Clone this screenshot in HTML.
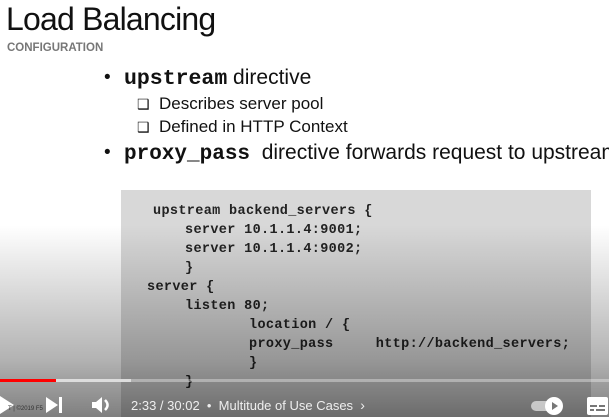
<!DOCTYPE html>
<html><head><style>
*{margin:0;padding:0;box-sizing:border-box}
html,body{width:609px;height:417px;overflow:hidden}
body{background:#fff;position:relative;font-family:"Liberation Sans",Arial,sans-serif;color:#111}
.a{position:absolute;white-space:nowrap}
.m{font-family:"Liberation Mono","Courier New",monospace;font-weight:bold}
#code{position:absolute;left:121px;top:190px;width:470px;height:227px;background:#d8d8d8}
.cl{position:absolute;font-family:"Liberation Mono",monospace;font-weight:bold;font-size:13.5px;letter-spacing:0.35px;color:#222;white-space:pre}
#shade{position:absolute;left:0;top:0;width:609px;height:417px;background:linear-gradient(to bottom,rgba(0,0,0,0) 0,rgba(0,0,0,0) 225px,rgba(0,0,0,0.12) 280px,rgba(0,0,0,0.3) 360px,rgba(0,0,0,0.5) 417px)}
</style></head><body>
<div class="a" style="left:6px;top:1px;font-size:32px;letter-spacing:-0.8px;color:#111">Load Balancing</div>
<div class="a" style="left:7px;top:42px;font-size:11.5px;font-weight:bold;color:#777">CONFIGURATION</div>

<div class="a" style="left:104px;top:67px;font-size:19px">•</div>
<div class="a" style="left:124px;top:66px;font-size:21px"><span class="m" style="font-size:21.5px">upstream</span> directive</div>
<div class="a" style="left:137px;top:94px;font-size:17px"><span style="font-size:14px">❑</span>&nbsp; Describes server pool</div>
<div class="a" style="left:137px;top:117px;font-size:17px"><span style="font-size:14px">❑</span>&nbsp; Defined in HTTP Context</div>
<div class="a" style="left:104px;top:142px;font-size:19px">•</div>
<div class="a" style="left:124px;top:141px;font-size:21px"><span class="m" style="font-size:21px">proxy_pass</span>&nbsp; directive forwards request to upstream</div>

<div id="code"></div>
<div class="cl" style="left:153px;top:204px">upstream backend_servers {</div>
<div class="cl" style="left:185px;top:223px">server 10.1.1.4:9001;</div>
<div class="cl" style="left:185px;top:242px">server 10.1.1.4:9002;</div>
<div class="cl" style="left:185px;top:261px">}</div>
<div class="cl" style="left:147px;top:280px">server {</div>
<div class="cl" style="left:185px;top:299px">listen 80;</div>
<div class="cl" style="left:249px;top:318px">location / {</div>
<div class="cl" style="left:249px;top:337px">proxy_pass     http://backend_servers;</div>
<div class="cl" style="left:249px;top:356px">}</div>
<div class="cl" style="left:185px;top:375px">}</div>

<div id="shade"></div>

<div class="a" style="left:0;top:379px;width:609px;height:3px;background:rgba(255,255,255,0.35)"></div>
<div class="a" style="left:0;top:379px;width:131px;height:3px;background:#ddd"></div>
<div class="a" style="left:0;top:379px;width:56px;height:3px;background:#f00"></div>

<svg class="a" style="left:0;top:395px" width="130" height="20" viewBox="0 0 130 20">
<polygon points="0,1 14,10 0,19" fill="#fff"/>
<polygon points="46,2 58,10 46,18" fill="#fff"/><rect x="59" y="2" width="3" height="16" fill="#fff"/>
<polygon points="92,7 96,7 102,2 102,18 96,13 92,13" fill="#fff"/>
<path d="M105 5 Q110 10 105 15" stroke="#fff" stroke-width="2.5" fill="none"/>
</svg>
<div class="a" style="left:8px;top:406px;font-size:6px;color:#333">T | ©2019 F5</div>
<div class="a" style="left:131px;top:397px;font-size:13px;color:#eee">2:33 / 30:02 &nbsp;• &nbsp;Multitude of Use Cases &nbsp;<span style="font-size:14px">›</span></div>
<div class="a" style="left:531px;top:401px;width:28px;height:10px;border-radius:5px;background:rgba(255,255,255,0.6)"></div>
<div class="a" style="left:545px;top:397px;width:18px;height:18px;border-radius:9px;background:#fff"></div>
<svg class="a" style="left:550px;top:401px" width="10" height="10"><polygon points="2,1 8,5 2,9" fill="#777"/></svg>
<div class="a" style="left:587px;top:397px;width:21px;height:18px;border-radius:2px;background:#fff"></div>
<div class="a" style="left:590px;top:405px;width:7px;height:2px;background:#777"></div>
<div class="a" style="left:599px;top:405px;width:6px;height:2px;background:#777"></div>
<div class="a" style="left:590px;top:409px;width:4px;height:2px;background:#777"></div>
<div class="a" style="left:596px;top:409px;width:9px;height:2px;background:#777"></div>
</body></html>
